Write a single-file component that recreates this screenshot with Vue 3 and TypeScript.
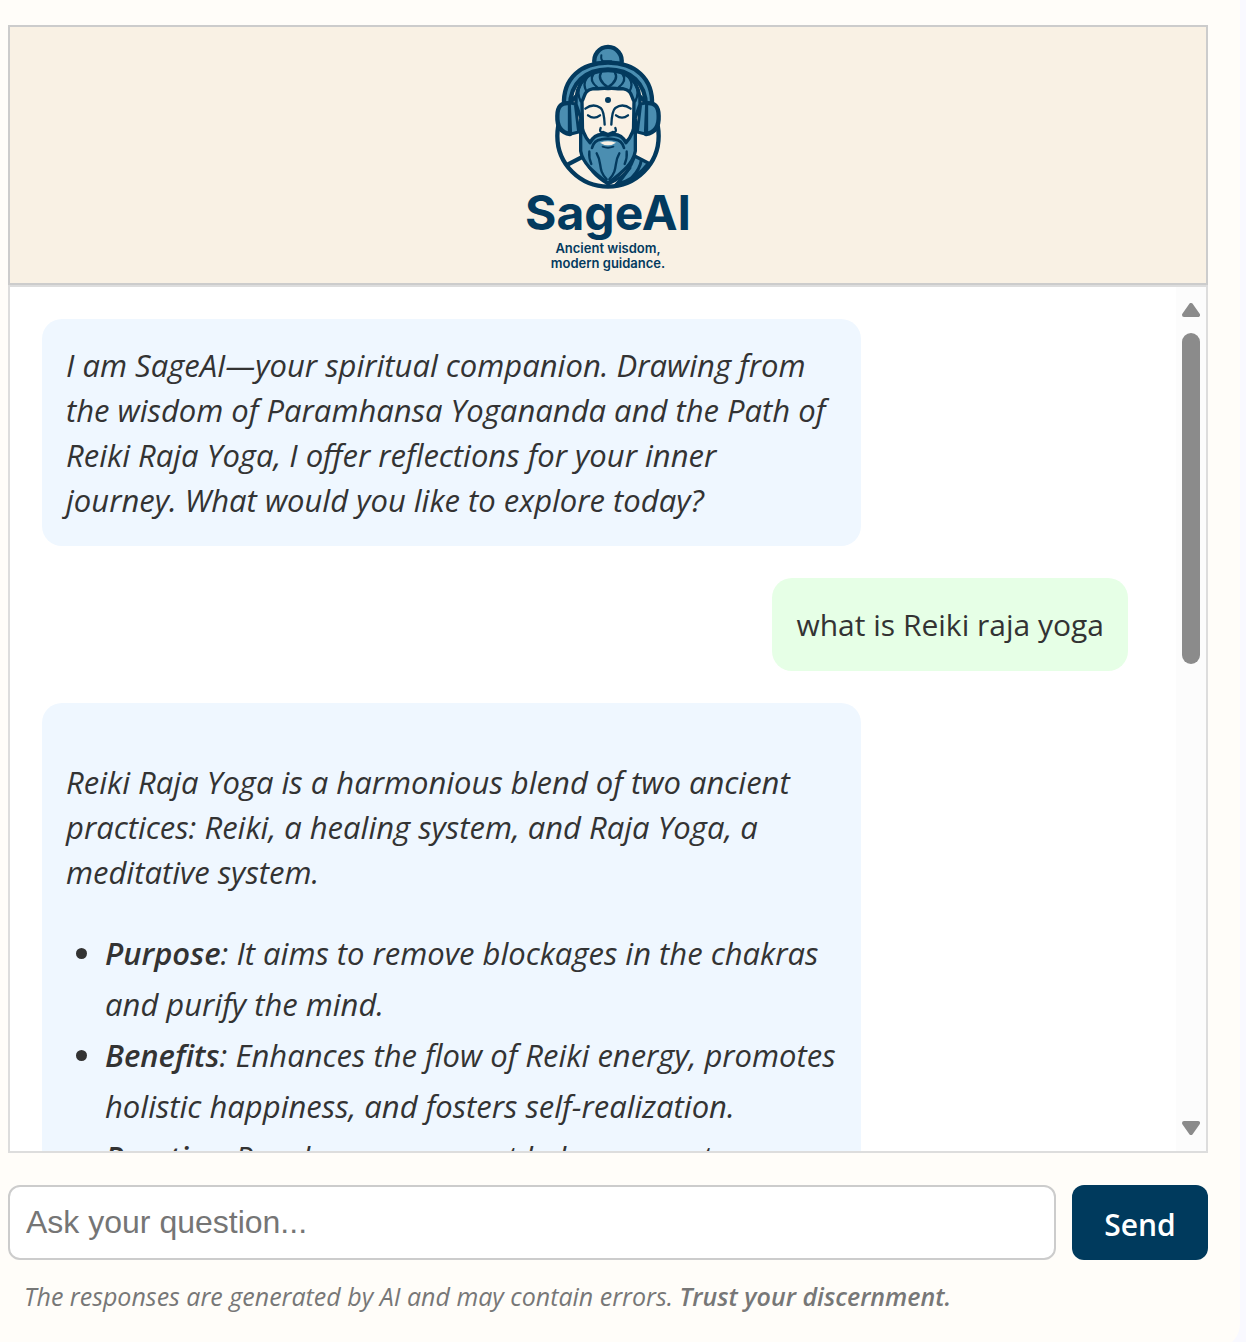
<script setup lang="ts">
import { ref } from 'vue'

interface Point {
  term: string
  text: string
}
interface Message {
  from: 'sage' | 'user'
  text: string
  points?: Point[]
}

const draft = ref('')
const messages = ref<Message[]>([
  {
    from: 'sage',
    text: 'I am SageAI—your spiritual companion. Drawing from the wisdom of Paramhansa Yogananda and the Path of Reiki Raja Yoga, I offer reflections for your inner journey.\u00a0What would you like to explore today?',
  },
  { from: 'user', text: 'what is Reiki raja yoga' },
  {
    from: 'sage',
    text: 'Reiki Raja Yoga is a harmonious blend of two ancient practices: Reiki, a healing system, and Raja Yoga, a meditative system.',
    points: [
      { term: 'Purpose', text: 'It aims to remove blockages in the chakras and purify the mind.' },
      { term: 'Benefits', text: 'Enhances the flow of Reiki energy, promotes holistic happiness, and fosters self-realization.' },
      { term: 'Practice', text: 'Regular engagement helps connect' },
    ],
  },
])

function send() {
  const text = draft.value.trim()
  if (!text) return
  messages.value.push({ from: 'user', text })
  draft.value = ''
}
</script>

<template>
  <div class="page">
    <main class="card">
      <header class="brand">
        <svg class="emblem" viewBox="40 24 328 438" aria-hidden="true">
          <g stroke="#033a5e" stroke-width="13" stroke-linejoin="round" stroke-linecap="round" fill="none">
            <circle cx="204" cy="300" r="152" fill="#faf1e4" />
            <path d="M84 385L136 358" />
            <path d="M284 360L326 382Q290 430 228 446Q266 410 284 360Z" fill="#4b8eb1" stroke-width="10" />
            <path d="M304 372Q300 400 276 424" stroke-width="9" />
            <path d="M136 366Q148 410 204 444Q250 424 270 396" stroke-width="9" />
            <path d="M164 84A41 42 0 1 1 244 84Z" fill="#4b8eb1" />
            <path d="M184 58Q182 72 190 76H214" stroke-width="6" />
            <path d="M72 208C68 126 124 80 204 80S340 126 336 208L318 212C318 140 270 100 204 100S90 140 90 212Z" fill="#4b8eb1" />
            <path d="M108 205C104 140 146 104 204 104S304 140 300 205L284 250H124Z" fill="#4b8eb1" stroke-width="10" />
            <path d="M128 310L126 196C136 180 130 164 160 158C178 160 190 154 204 158C218 154 230 160 248 158C278 164 272 180 282 196L280 310L204 330Z" fill="#faf1e4" stroke-width="10" />
            <path d="M204 154C180 138 174 124 184 108M204 154C228 138 234 124 224 108M172 154C154 140 152 126 160 114M236 154C254 140 256 126 248 114M140 168C130 150 132 138 140 126M268 168C278 150 276 138 268 126M122 196C112 176 114 160 122 146M286 196C296 176 294 160 286 146" stroke-width="7" />
            <path d="M90 202Q52 196 52 240Q50 288 90 294Z" fill="#4b8eb1" />
            <path d="M318 202Q356 196 356 240Q358 288 318 294Z" fill="#4b8eb1" />
            <path d="M88 200L106 204L116 288L92 294Z" fill="#4b8eb1" stroke-width="9" />
            <path d="M320 200L302 204L292 288L316 294Z" fill="#4b8eb1" stroke-width="9" />
            <path d="M122 250V345C128 382 160 408 204 442C248 408 280 382 286 345V250C284 280 272 304 258 320C246 296 226 292 204 298C182 292 162 296 150 320C136 304 124 280 122 250Z" fill="#4b8eb1" stroke-width="10" />
            <path d="M156 336Q162 312 184 310Q204 306 224 310Q246 312 252 336" stroke-width="8" />
            <path d="M180 320Q204 312 228 320Q204 336 180 320Z" fill="#faf1e4" stroke="none" />
            <path d="M188 332Q204 338 220 332" stroke-width="6" />
            <path d="M148 346Q146 366 154 384M260 346Q262 366 254 384M170 352C188 382 172 400 200 430M238 352C220 382 236 400 208 430" stroke-width="7" />
            <path d="M136 218Q160 200 182 216Q192 224 194 266M272 218Q248 200 226 216Q216 224 214 266" stroke-width="7" />
            <path d="M144 238Q162 252 180 238M228 238Q246 252 264 238" stroke-width="7" />
            <path d="M182 276Q176 290 190 288L204 294L218 288Q232 290 226 276" stroke-width="7" />
          </g>
          <circle cx="204" cy="192" r="9" fill="#033a5e" />
        </svg>
        <h1>SageAI</h1>
        <p>Ancient wisdom,<br />modern guidance.</p>
      </header>

      <section class="chat" aria-label="Conversation">
        <div class="messages">
          <article v-for="(m, i) in messages" :key="i" :class="['bubble', m.from, { rich: m.points }]">
            <p>{{ m.text }}</p>
            <ul v-if="m.points">
              <li v-for="p in m.points" :key="p.term"><strong>{{ p.term }}</strong>: {{ p.text }}</li>
            </ul>
          </article>
        </div>
        <div class="scrollbar" aria-hidden="true">
          <svg viewBox="0 0 18 14"><path d="M9 2L16 12H2Z" /></svg>
          <div class="track"><div class="thumb"></div></div>
          <svg viewBox="0 0 18 14"><path d="M9 12L16 2H2Z" /></svg>
        </div>
      </section>

      <form class="ask" @submit.prevent="send">
        <input v-model="draft" type="text" placeholder="Ask your question..." aria-label="Ask your question" />
        <button type="submit">Send</button>
      </form>
      <p class="note">The responses are generated by AI and may contain errors. <strong>Trust your discernment.</strong></p>
    </main>
  </div>
</template>

<style>
body {
  background: #f9f9ff;
}
</style>

<style scoped>
* {
  box-sizing: border-box;
}
.page {
  height: 100vh;
  overflow: hidden;
  padding-right: 6px;
  font-family: "Segoe UI", "Open Sans", "Noto Sans", sans-serif;
  color: #333;
}
.card {
  display: flex;
  flex-direction: column;
  height: calc(100vh + 6px);
  padding: 25px 32px 0 8px;
  background: #fffdf9;
  border-bottom-right-radius: 24px;
}
.brand {
  display: flex;
  flex-direction: column;
  align-items: center;
  height: 260px;
  padding-top: 17px;
  border: 2px solid #ccc;
  background: #f9f1e4;
  color: #033a5e;
  text-align: center;
  font-family: Inter, sans-serif;
}
.emblem {
  width: 110px;
  height: 146px;
  flex: none;
}
.brand h1 {
  margin: 0;
  font-size: 48px;
  line-height: 45px;
  font-weight: 700;
}
.brand p {
  margin: 6px 0 0;
  font-size: 13px;
  line-height: 15px;
  font-weight: 600;
}
.chat {
  display: flex;
  flex: none;
  height: 868px;
  border: 2px solid #ddd;
  background: #fff;
}
.messages {
  display: flex;
  flex: 1;
  flex-direction: column;
  gap: 32px;
  padding: 32px 42px 0 32px;
  overflow: hidden;
}
.bubble {
  flex: none;
  max-width: 75%;
  padding: 24px;
  border-radius: 20px;
  font-size: 31px;
  line-height: 45px;
}
.bubble p {
  margin: 0;
}
.bubble.sage {
  width: 75%;
  padding-bottom: 23px;
  background: #eff7ff;
  font-style: italic;
}
.bubble.user {
  align-self: flex-end;
  margin-right: 6px;
  background: #e6ffe6;
  font-size: 30px;
}
.bubble.rich p {
  margin: 33px 0;
}
.bubble ul {
  margin: 0;
  padding-left: 39px;
  line-height: 51px;
}
.bubble strong,
.note strong {
  font-weight: 600;
}
.scrollbar {
  display: flex;
  flex-direction: column;
  align-items: center;
  width: 30px;
  padding: 16px 0;
  background: #fcfcfc;
}
.scrollbar svg {
  width: 18px;
  height: 14px;
  fill: #8b8b8b;
  stroke: #8b8b8b;
  stroke-width: 4px;
  stroke-linejoin: round;
}
.track {
  flex: 1;
  width: 18px;
  margin: 16px 0;
}
.thumb {
  height: 331px;
  border-radius: 9px;
  background: #8b8b8b;
}
.ask {
  display: flex;
  gap: 16px;
  margin-top: 32px;
}
.ask input {
  flex: 1;
  min-width: 0;
  height: 75px;
  padding: 0 16px;
  border: 2px solid #ccc;
  border-radius: 12px;
  background: #fff;
  font: 32px "Liberation Sans", Arial, sans-serif;
  color: #333;
}
.ask input::placeholder {
  color: #757575;
}
.ask button {
  width: 136px;
  padding: 4px 0 0;
  border: 0;
  border-radius: 12px;
  background: #003a5d;
  color: #fff;
  font: inherit;
  font-size: 30px;
  font-weight: 600;
}
.note {
  margin: 16px;
  font-size: 25px;
  line-height: 40px;
  font-style: italic;
  color: #777;
}
</style>
